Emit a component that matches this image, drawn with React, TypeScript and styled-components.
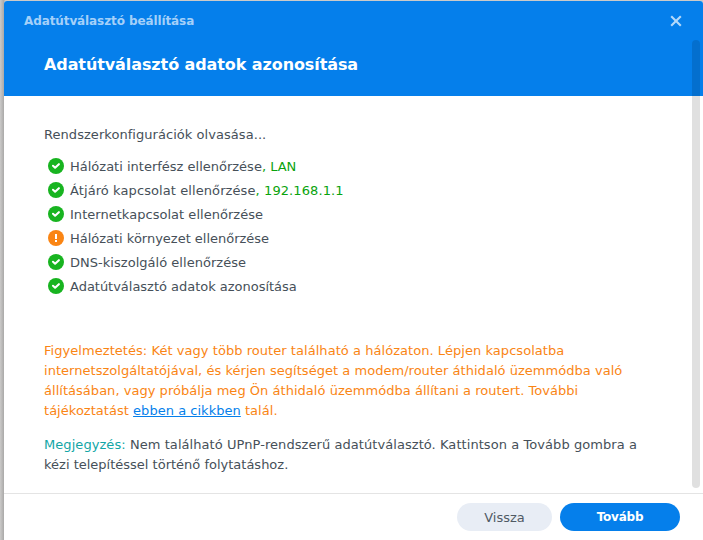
import React from "react";
import styled, { createGlobalStyle } from "styled-components";

const GlobalStyle = createGlobalStyle`
  * { box-sizing: border-box; }
  html, body { margin: 0; padding: 0; overflow: hidden; }
  body { font-family: "DejaVu Sans", Verdana, sans-serif; font-size: 13px; color: #465059; }
`;

const Desktop = styled.div`
  display: flex;
  width: 703px;
  height: 540px;
  padding: 1px 0 0 4px;
  background: linear-gradient(90deg, #cbcac9 0, #aaa9a8 4px, #cbcac9 5px);
  overflow: hidden;
`;

const Dialog = styled.main`
  position: relative;
  flex: 1;
  display: flex;
  flex-direction: column;
  background: #fff;
  border-radius: 3px 3px 0 0;
  overflow: hidden;
`;

const Header = styled.header`
  height: 95px;
  background: #057feb;
`;

const TitleBar = styled.div`
  display: flex;
  align-items: center;
  justify-content: space-between;
  height: 39px;
  padding: 0 21px 0 20px;
`;

const WindowTitle = styled.div`
  font-size: 12px;
  font-weight: 700;
  line-height: 16px;
  letter-spacing: -0.1px;
  color: #a4d0f9;
`;

const CloseButton = styled.button`
  display: flex;
  padding: 1px 0 0;
  border: 0;
  background: none;
`;

const StepTitle = styled.h1`
  margin: 0;
  padding: 13px 40px 0;
  font-size: 16px;
  font-weight: 700;
  line-height: 24px;
  letter-spacing: -0.09px;
  color: #fff;
`;

const Body = styled.section`
  flex: 1;
  padding: 29px 40px 0;
`;

const TextLine = styled.div<{ $spacing?: number }>`
  line-height: 20px;
  white-space: nowrap;
  letter-spacing: ${({ $spacing = 0 }) => $spacing}px;
`;

const CheckList = styled.ul`
  list-style: none;
  margin: 9px 0 0;
  padding: 0 0 0 4px;
`;

const CheckRow = styled.li`
  display: flex;
  align-items: center;
  gap: 6px;
  height: 24px;
`;

const CheckText = styled(TextLine)`
  padding-top: 2px;
`;

const Good = styled.span`
  color: #0aa30d;
`;

const Warning = styled.div`
  margin-top: 43px;
  color: #fa8514;
`;

const Note = styled.div`
  margin-top: 14px;
`;

const NoteLabel = styled.span`
  color: #12a6a6;
`;

const Link = styled.a`
  color: #057feb;
  text-decoration: underline;
  text-decoration-thickness: 1px;
  text-underline-offset: 1px;
  text-decoration-skip-ink: none;
`;

const Scrollbar = styled.div`
  position: absolute;
  top: 39px;
  right: 3px;
  width: 8px;
  height: 448px;
  border-radius: 4px;
  background: rgba(0, 0, 0, 0.12);
`;

const Footer = styled.footer`
  display: flex;
  justify-content: flex-end;
  gap: 8px;
  height: 47px;
  padding: 9px 23px 0 0;
  border-top: 1px solid #e4e4e4;
`;

const Button = styled.button<{ $primary?: boolean }>`
  width: ${({ $primary }) => ($primary ? 120 : 95)}px;
  height: 28px;
  padding: 1px 0 0;
  border: 0;
  border-radius: 14px;
  font-family: inherit;
  font-size: ${({ $primary }) => ($primary ? 12 : 13)}px;
  font-weight: ${({ $primary }) => ($primary ? 700 : 400)};
  letter-spacing: ${({ $primary }) => ($primary ? -0.25 : 0)}px;
  line-height: 27px;
  color: ${({ $primary }) => ($primary ? "#fff" : "#505a64")};
  background: ${({ $primary }) => ($primary ? "#057feb" : "#e8edf5")};
`;

const StatusIcon = ({ ok }: { ok: boolean }) => (
  <svg width="16" height="16" viewBox="0 0 16 16">
    <circle cx="8" cy="8" r="8" fill={ok ? "#18b420" : "#fa8514"} />
    {ok ? (
      <path d="M5 7.8 7.1 9.7l3.8-3.5" fill="none" stroke="#fff" strokeWidth="2.1" strokeLinecap="round" strokeLinejoin="round" />
    ) : (
      <path d="M7 4h2v5H7zM7 10h2v2H7z" fill="#fff" />
    )}
  </svg>
);

const checks = [
  { label: "Hálózati interfész ellenőrzése", value: "LAN", ok: true, spacing: 0 },
  { label: "Átjáró kapcsolat ellenőrzése", value: "192.168.1.1", ok: true, spacing: 0.09 },
  { label: "Internetkapcsolat ellenőrzése", ok: true, spacing: 0.03 },
  { label: "Hálózati környezet ellenőrzése", ok: false, spacing: -0.01 },
  { label: "DNS-kiszolgáló ellenőrzése", ok: true, spacing: 0.03 },
  { label: "Adatútválasztó adatok azonosítása", ok: true, spacing: -0.02 },
];

export default function App() {
  return (
    <Desktop>
      <GlobalStyle />
      <Dialog>
        <Header>
          <TitleBar>
            <WindowTitle>Adatútválasztó beállítása</WindowTitle>
            <CloseButton aria-label="Bezárás">
              <svg width="12" height="12" viewBox="0 0 12 12">
                <path d="m1.2 1.2 9.6 9.6m0-9.6-9.6 9.6" stroke="#b4d9fa" strokeWidth="2.1" />
              </svg>
            </CloseButton>
          </TitleBar>
          <StepTitle>Adatútválasztó adatok azonosítása</StepTitle>
        </Header>
        <Body>
          <TextLine $spacing={0.05}>Rendszerkonfigurációk olvasása...</TextLine>
          <CheckList>
            {checks.map(({ label, value, ok, spacing }) => (
              <CheckRow key={label}>
                <StatusIcon ok={ok} />
                <CheckText $spacing={spacing}>
                  {label}
                  {value && <Good>, {value}</Good>}
                </CheckText>
              </CheckRow>
            ))}
          </CheckList>
          <Warning>
            <TextLine $spacing={0.05}>
              Figyelmeztetés: Két vagy több router található a hálózaton. Lépjen kapcsolatba
            </TextLine>
            <TextLine $spacing={0.03}>
              internetszolgáltatójával, és kérjen segítséget a modem/router áthidaló üzemmódba való
            </TextLine>
            <TextLine $spacing={0.03}>
              állításában, vagy próbálja meg Ön áthidaló üzemmódba állítani a routert. További
            </TextLine>
            <TextLine $spacing={0.03}>
              tájékoztatást <Link>ebben a cikkben</Link> talál.
            </TextLine>
          </Warning>
          <Note>
            <TextLine $spacing={0.065}>
              <NoteLabel>Megjegyzés:</NoteLabel> Nem található UPnP-rendszerű adatútválasztó. Kattintson a Tovább gombra a
            </TextLine>
            <TextLine $spacing={0}>kézi telepítéssel történő folytatáshoz.</TextLine>
          </Note>
        </Body>
        <Footer>
          <Button>Vissza</Button>
          <Button $primary>Tovább</Button>
        </Footer>
        <Scrollbar />
      </Dialog>
    </Desktop>
  );
}
